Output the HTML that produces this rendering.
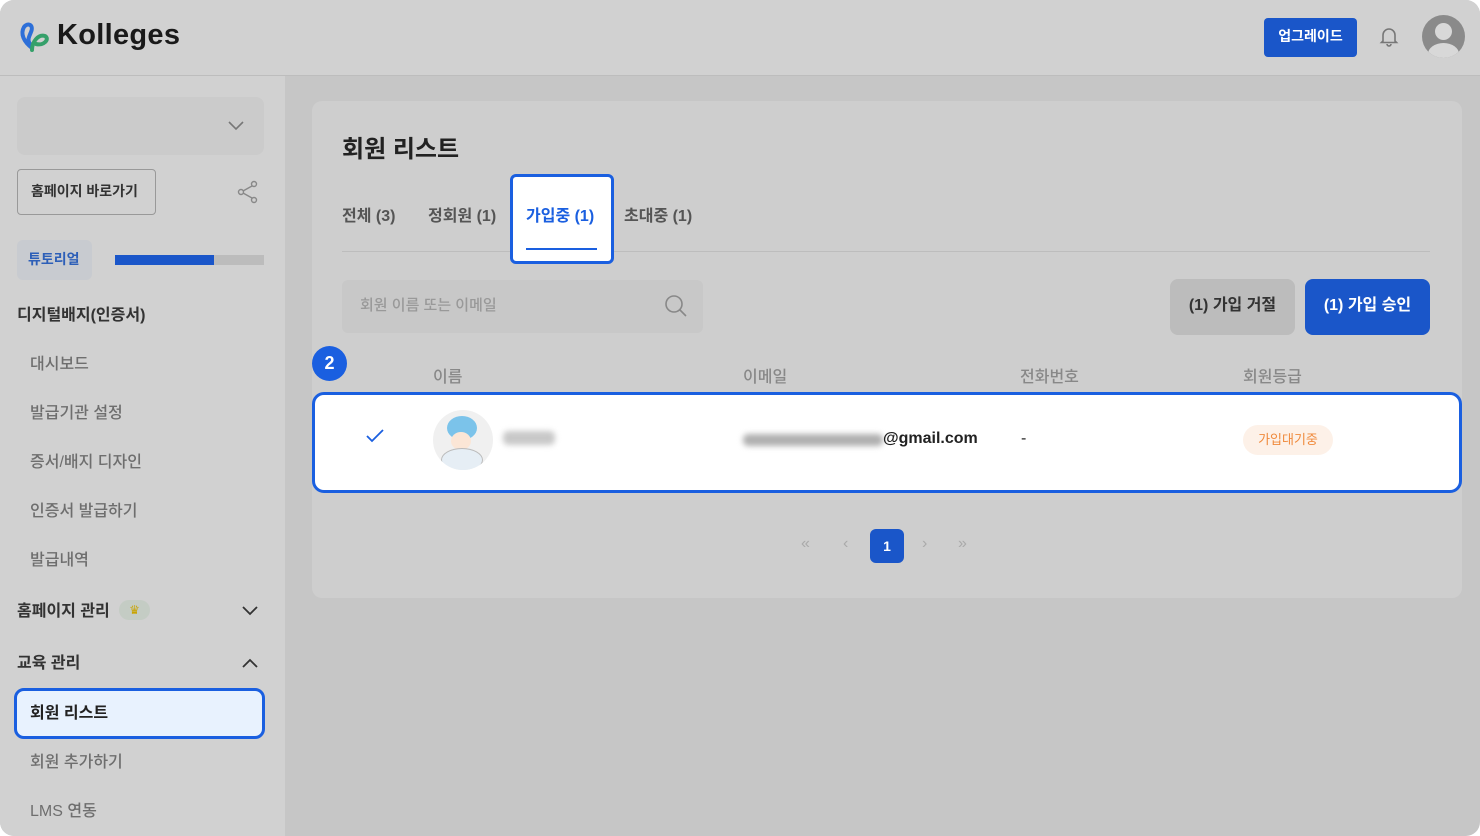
<!DOCTYPE html><html><head><meta charset="utf-8"><style>
*{box-sizing:border-box;margin:0;padding:0}
body{width:1480px;height:836px;background:#fff;font-family:"Liberation Sans","Noto Sans CJK KR",sans-serif;overflow:hidden;position:relative}
.page{position:absolute;inset:0;background:#c6c6c6;border-radius:14px;overflow:hidden}
.hdr{position:absolute;left:0;top:0;width:1480px;height:76px;background:#d1d1d1;border-bottom:1px solid #bdbdbd}
.side{position:absolute;left:0;top:76px;width:285px;height:760px;background:#d1d1d1}
.abs{position:absolute}
.t{position:absolute;font-size:16px;color:#4a4a4a;white-space:nowrap}
.b{font-weight:700}
.m{font-weight:500;color:#6e6e6e}
</style></head><body><div class="page">
<div class="hdr">
<svg class="abs" style="left:18px;top:20px" width="34" height="34" viewBox="0 0 34 34"><path d="M14 28 C6 22 2 14 6 7 C10 2 16 5 13 12 C11 17 9 20 12 24" fill="none" stroke="#2d6fd8" stroke-width="4" stroke-linecap="round"/><path d="M14 30 C14 22 20 14 27 16 C32 19 26 26 18 24" fill="none" stroke="#35a06a" stroke-width="4" stroke-linecap="round"/></svg>
<div class="t b" style="left:57px;top:19px;font-size:29px;color:#1a1a1a;letter-spacing:0.3px">Kolleges</div>
<div class="abs" style="left:1264px;top:18px;width:93px;height:39px;background:#1a56c9;border-radius:4px;color:#fff;font-size:14px;font-weight:700;text-align:center;line-height:37px">업그레이드</div>
<svg class="abs" style="left:1377px;top:24px" width="24" height="24" viewBox="0 0 24 24"><path d="M6 17V11a6 6 0 0 1 12 0v6l1.5 1.5h-15zM10 20a2 2 0 0 0 4 0" fill="none" stroke="#777" stroke-width="1.6"/></svg>
<div class="abs" style="left:1422px;top:15px;width:43px;height:43px;border-radius:50%;background:#8a8a8a;overflow:hidden"><div class="abs" style="left:13px;top:8px;width:17px;height:17px;border-radius:50%;background:#d8d8d8"></div><div class="abs" style="left:6px;top:28px;width:31px;height:22px;border-radius:50%;background:#d8d8d8"></div></div>
</div>
<div class="side">
<div class="abs" style="left:17px;top:21px;width:247px;height:58px;background:#cbcbcb;border-radius:8px"></div>
<svg class="abs" style="left:228px;top:45px" width="16" height="10"><path d="M1 1l7 7 7-7" fill="none" stroke="#777" stroke-width="1.6"/></svg>
<div class="abs" style="left:17px;top:93px;width:139px;height:46px;border:1px solid #999;border-radius:4px"></div>
<div class="t b" style="left:31px;top:105px;font-size:14px;color:#333">홈페이지 바로가기</div>
<svg class="abs" style="left:237px;top:104px" width="22" height="24" viewBox="0 0 22 24"><circle cx="17" cy="4" r="2.5" fill="none" stroke="#888" stroke-width="1.4"/><circle cx="4" cy="12" r="2.5" fill="none" stroke="#888" stroke-width="1.4"/><circle cx="17" cy="20" r="2.5" fill="none" stroke="#888" stroke-width="1.4"/><path d="M6 11l9-5M6 13l9 5" stroke="#888" stroke-width="1.4"/></svg>
<div class="abs" style="left:17px;top:164px;width:75px;height:40px;background:#c8cbd0;border-radius:6px"></div>
<div class="t b" style="left:28px;top:173px;font-size:14px;color:#2d5fb8">튜토리얼</div>
<div class="abs" style="left:115px;top:179px;width:149px;height:10px;background:#bcbcbc"></div>
<div class="abs" style="left:115px;top:179px;width:99px;height:10px;background:#1a56c9"></div>
<div class="t b" style="left:17px;top:225px;color:#333">디지털배지(인증서)</div>
<div class="t m" style="left:30px;top:274px">대시보드</div>
<div class="t m" style="left:30px;top:323px">발급기관 설정</div>
<div class="t m" style="left:30px;top:372px">증서/배지 디자인</div>
<div class="t m" style="left:30px;top:421px">인증서 발급하기</div>
<div class="t m" style="left:30px;top:470px">발급내역</div>
<div class="t b" style="left:17px;top:521px;color:#333">홈페이지 관리</div>
<div class="abs" style="left:119px;top:524px;width:31px;height:20px;background:#c4ccc4;border-radius:10px;color:#c9a400;font-size:12px;text-align:center;line-height:20px">♛</div>
<svg class="abs" style="left:242px;top:530px" width="16" height="10"><path d="M1 1l7 7 7-7" fill="none" stroke="#333" stroke-width="1.8"/></svg>
<div class="t b" style="left:17px;top:573px;color:#333">교육 관리</div>
<svg class="abs" style="left:242px;top:582px" width="16" height="10"><path d="M1 9l7-7 7 7" fill="none" stroke="#333" stroke-width="1.8"/></svg>
<div class="abs" style="left:14px;top:612px;width:251px;height:51px;background:#e8f2fe;border:3px solid #1a5fe0;border-radius:10px"></div>
<div class="t b" style="left:30px;top:623px;color:#222">회원 리스트</div>
<div class="t m" style="left:30px;top:672px">회원 추가하기</div>
<div class="t m" style="left:30px;top:721px">LMS 연동</div>
</div>
<div class="abs" style="left:312px;top:101px;width:1150px;height:497px;background:#cecece;border-radius:10px"></div>
<div class="t b" style="left:342px;top:129px;font-size:24px;color:#222">회원 리스트</div>
<div class="t b" style="left:342px;top:202px;color:#555">전체 (3)</div>
<div class="t b" style="left:428px;top:202px;color:#555">정회원 (1)</div>
<div class="t b" style="left:624px;top:202px;color:#555">초대중 (1)</div>
<div class="abs" style="left:342px;top:251px;width:1088px;height:1px;background:#bdbdbd"></div>
<div class="abs" style="left:510px;top:174px;width:104px;height:90px;background:#fff;border:3px solid #1a5fe0;border-radius:6px"></div>
<div class="t b" style="left:526px;top:202px;color:#1a5fe0">가입중 (1)</div>
<div class="abs" style="left:526px;top:248px;width:71px;height:2px;background:#1a5fe0"></div>
<div class="abs" style="left:342px;top:280px;width:361px;height:53px;background:#c8c8c8;border-radius:6px"></div>
<div class="t" style="left:360px;top:294px;font-size:15px;color:#999;font-weight:500">회원 이름 또는 이메일</div>
<svg class="abs" style="left:664px;top:294px" width="24" height="24"><circle cx="10" cy="10" r="8" fill="none" stroke="#888" stroke-width="1.6"/><path d="M16 16l6 6" stroke="#888" stroke-width="1.6"/></svg>
<div class="abs" style="left:1170px;top:279px;width:125px;height:56px;background:#bcbcbc;border-radius:8px;color:#333;font-weight:700;font-size:16px;text-align:center;line-height:54px">(1) 가입 거절</div>
<div class="abs" style="left:1305px;top:279px;width:125px;height:56px;background:#1a56c9;border-radius:8px;color:#fff;font-weight:700;font-size:16px;text-align:center;line-height:54px">(1) 가입 승인</div>
<div class="abs" style="left:312px;top:346px;width:35px;height:35px;border-radius:50%;background:#1a5fe0;color:#fff;font-weight:700;font-size:18px;text-align:center;line-height:35px">2</div>
<div class="t m" style="left:433px;top:363px;color:#888">이름</div>
<div class="t m" style="left:743px;top:363px;color:#888">이메일</div>
<div class="t m" style="left:1020px;top:363px;color:#888">전화번호</div>
<div class="t m" style="left:1243px;top:363px;color:#888">회원등급</div>
<div class="abs" style="left:312px;top:392px;width:1150px;height:101px;background:#fff;border:3px solid #1a5fe0;border-radius:12px"></div>
<svg class="abs" style="left:365px;top:428px" width="20" height="16"><path d="M2 8l5 5 11-11" fill="none" stroke="#1a5fe0" stroke-width="1.8"/></svg>
<div class="abs" style="left:433px;top:410px;width:60px;height:60px;border-radius:50%;background:#f0f0f0;overflow:hidden"><div class="abs" style="left:14px;top:6px;width:30px;height:24px;border-radius:50%;background:#7bc3ea"></div><div class="abs" style="left:18px;top:22px;width:20px;height:18px;border-radius:50%;background:#fbe6d6"></div><div class="abs" style="left:8px;top:38px;width:42px;height:24px;border-radius:50%;background:#e6eef5;border:1px solid #bbb"></div></div>
<div class="abs" style="left:503px;top:431px;width:52px;height:14px;background:#c8c8c8;border-radius:5px;filter:blur(3px)"></div>
<div class="abs" style="left:743px;top:434px;width:140px;height:12px;background:#b0b0b0;border-radius:5px;filter:blur(3px)"></div>
<div class="t b" style="left:883px;top:430px;color:#222">@gmail.com</div>
<div class="t" style="left:1021px;top:430px;color:#222">-</div>
<div class="abs" style="left:1243px;top:425px;width:90px;height:30px;background:#fdf1e8;border-radius:15px;color:#f08a3c;font-size:13px;text-align:center;line-height:29px">가입대기중</div>
<div class="t" style="left:801px;top:535px;color:#aaa">«</div>
<div class="t" style="left:843px;top:535px;color:#aaa">‹</div>
<div class="abs" style="left:870px;top:529px;width:34px;height:34px;background:#1a56c9;border-radius:6px;color:#fff;font-weight:700;font-size:14px;text-align:center;line-height:34px">1</div>
<div class="t" style="left:922px;top:535px;color:#aaa">›</div>
<div class="t" style="left:958px;top:535px;color:#aaa">»</div>
</div></body></html>
